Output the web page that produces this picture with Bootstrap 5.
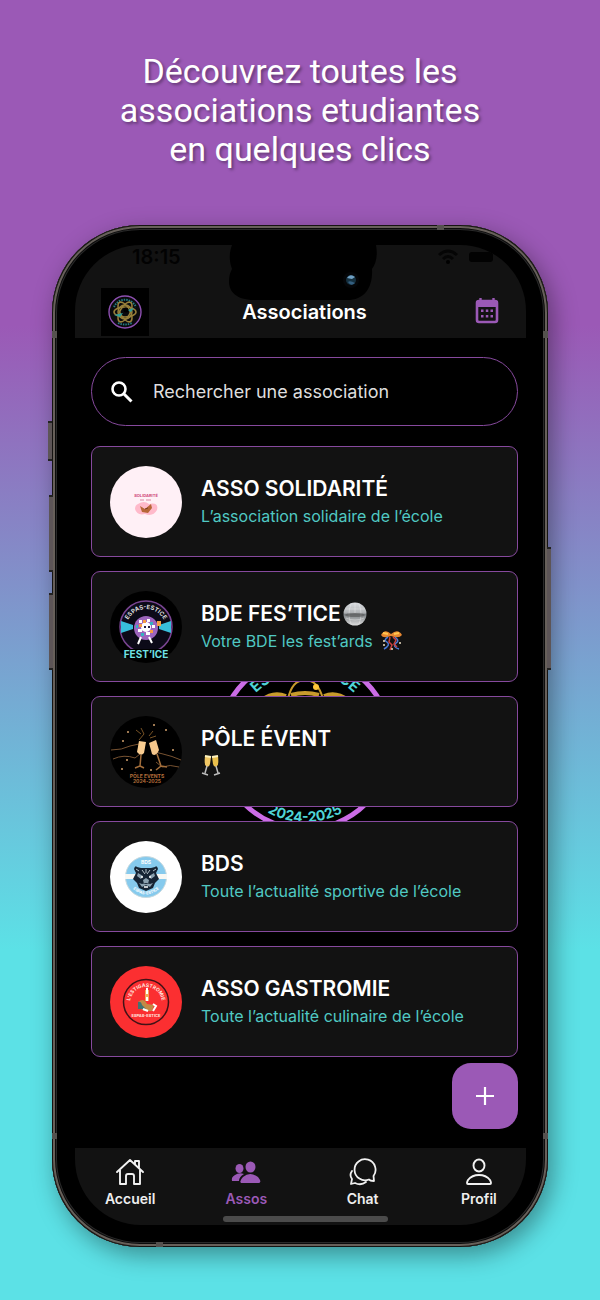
<!DOCTYPE html>
<html lang="fr">
<head>
<meta charset="utf-8">
<meta name="viewport" content="width=device-width, initial-scale=1">
<title>Associations</title>
<link href="https://cdn.jsdelivr.net/npm/bootstrap@5.3.0/dist/css/bootstrap.min.css" rel="stylesheet">
<style>
:root { --violet:#9b59b6; --surface:#121212; --teal:#50c9c3; }
body { font-family:Inter,"Liberation Sans",sans-serif; min-height:100vh; color:#fff;
  background:linear-gradient(180deg,#9b59b6 0,#9b59b6 25%,#5ce1e6 73%,#5ce1e6 100%); }
.promo { font-family:Roboto,"Liberation Sans",sans-serif; font-size:34px; line-height:39px; font-weight:400;
  padding:52px 16px 56px; margin:0; text-shadow:2px 2px 3px rgba(0,0,0,.35); }
.phone { margin:0 52px 54px; padding:20px 22px 22px 23px; background:#000; border-radius:88px;
  box-shadow:inset 0 0 0 1px #161412, inset 0 0 0 3px #67605a, inset 0 0 0 4px #0c0c0c, inset 0 0 0 5px #292929, 5px 8px 24px rgba(0,0,0,.38); }
.side-key { position:absolute; width:4px; background:#5d5557; border:solid #222; border-width:2px 0; }
.band { position:absolute; background:#55524f; }
.screen { border-radius:66px; background:#000; }
/* the app is a little wider than the visible glass */
.app-view { margin:0 -11px 0 -3px; }
.app-bar { height:93px; background:var(--surface); padding:0 38px 2px 29px; }
.app-bar h2 { font-size:20px; line-height:24px; font-weight:600; margin:0 0 12px; }
.bar-side { width:39px; margin-bottom:11px; }
.status { font-size:20px; line-height:24px; font-weight:600; color:#020202; }
.island { z-index:2; }
.content-area { padding:19px; }
.watermark { inset:0; }
.search-box { height:69px; border:1px solid #86499d; border-radius:35px; padding:0 20px 0 19px; gap:20px; background:#000; }
.search-box input { background:transparent; border:0; color:#fff; font-size:18px; line-height:24px; padding:0; min-width:0; outline:0; }
.search-box input::placeholder { color:#dedede; opacity:1; }
.asso-list { gap:14px; margin-top:20px; }
.asso { height:111px; border:1px solid #86499d; border-radius:9px; background:var(--surface); padding:0 18px; gap:19px; color:#fff; }
.asso h3 { font-size:21px; line-height:28px; font-weight:600; margin:0; }
.asso h3 svg { margin-left:2px; }
.asso p { font-size:16px; line-height:26px; min-height:26px; color:var(--teal); margin:0; }
.add-btn { width:66px; height:66px; border-radius:19px; background:var(--violet); border:0; margin-top:6px; }
.tab-bar { background:var(--surface); height:77px; padding-top:9px; }
.tab { color:#eee; font-size:14px; line-height:18px; font-weight:600; }
.tab svg { display:block; margin:0 auto 3px; }
.tab.active { color:var(--violet); }
.home-line { width:165px; height:6px; border-radius:3px; background:#4b4b4b; bottom:3px; left:50%; margin-left:-82px; }
svg text { font-family:Inter,"Liberation Sans",sans-serif; font-weight:700; }
</style>
</head>
<body>
<h1 class="promo text-center">Découvrez toutes les<br>associations etudiantes<br>en quelques clics</h1>

<main class="phone position-relative">
  <span class="side-key" style="left:-4px;top:196px;height:40px"></span>
  <span class="side-key" style="left:-3px;top:270px;height:77px"></span>
  <span class="side-key" style="left:-3px;top:368px;height:77px"></span>
  <span class="side-key" style="right:-3px;top:322px;height:123px"></span>
  <span class="band" style="left:0;top:106px;width:5px;height:7px"></span>
  <span class="band" style="right:0;top:106px;width:5px;height:7px"></span>
  <span class="band" style="left:0;bottom:108px;width:5px;height:6px"></span>
  <span class="band" style="right:0;bottom:108px;width:5px;height:6px"></span>
  <span class="band" style="right:104px;top:0;width:7px;height:5px"></span>
  <span class="band" style="left:104px;bottom:0;width:7px;height:5px"></span>

  <div class="screen overflow-hidden position-relative">
    <div class="app-view position-relative">
      <header class="app-bar d-flex align-items-end justify-content-between position-relative">
        <span class="status position-absolute" style="left:60px;top:0">18:15</span>
        <svg class="island position-absolute" style="left:157px;top:0" width="150" height="56" viewBox="0 0 150 56" aria-hidden="true">
          <path d="M3 0H147C149 10 147 19 143 24C144 42 136 55 118 55H25C7 55 0 46 0 37C0 31 1 28 3 24C0 16 0 8 3 0Z" fill="#000"/>
          <circle cx="122" cy="35" r="8" fill="#050608"/><circle cx="122" cy="35" r="5" fill="#15303f"/>
          <path d="M118 33Q121 28 126 32L123 34Z" fill="#6fa0c4"/><path d="M119 37Q121 35 126 38Q122 42 119 37Z" fill="#345f80"/>
        </svg>
        <svg class="position-absolute" style="right:19px;top:3px" width="80" height="18" viewBox="0 0 80 18" aria-hidden="true">
          <g fill="none" stroke="#050505" stroke-width="3"><path d="M1 7Q10-1 19 7M5 11Q10 6 15 11"/></g><circle cx="10" cy="14" r="2"/>
          <rect x="31" y="4" width="24" height="10" rx="3" fill="#020202"/>
        </svg>
        <svg class="flex-shrink-0" width="48" height="48" viewBox="0 0 48 48" role="img" aria-label="Logo">
          <rect width="48" height="48"/><circle cx="24" cy="24" r="16" fill="#0a0a0d" stroke="#8d4fb0" stroke-width="1.4"/>
          <path d="M13 19A12 12 0 0 1 35 19" fill="none" stroke="#247f83" stroke-width="2" stroke-dasharray="1.5 1"/>
          <path d="M17 35Q24 38 31 35" fill="none" stroke="#247f83" stroke-width="1.8" stroke-dasharray="1.5 1"/>
          <g fill="none" stroke="#98803a" stroke-width="1.5"><ellipse cx="24" cy="24" rx="11" ry="5"/><ellipse cx="24" cy="24" rx="11" ry="5" transform="rotate(60 24 24)"/><ellipse cx="24" cy="24" rx="11" ry="5" transform="rotate(120 24 24)"/><circle cx="24" cy="24" r="7"/></g>
          <path d="M13 27L22 25L19 29ZM26 22L33 20L30 24Z" fill="#2d9c98"/><circle cx="25" cy="22" r="2.5"/>
        </svg>
        <h2>Associations</h2>
        <button type="button" class="bar-side btn p-0 border-0 text-end" aria-label="Calendrier">
          <svg class="d-block ms-auto" width="24" height="28" viewBox="0 0 24 28"><path d="M5.500 1V5M18.500 1V5" stroke="#9b59b6" stroke-width="2.4"/><rect x="2" y="4" width="20" height="21" rx="2" fill="none" stroke="#9b59b6" stroke-width="2.6"/><path d="M1 4H23V10H1Z" fill="#9b59b6"/><path fill="#9b59b6" d="M6 12.500h2.500v2.500H6zM10.800 12.500h2.500v2.500h-2.500zM15.500 12.500h2.500v2.500h-2.500zM6 18h2.500v2.500H6zM10.800 18h2.500v2.500h-2.500zM15.500 18h2.500v2.500h-2.500z"/></svg>
        </button>
      </header>

      <section class="content-area position-relative d-flex flex-column">
        <div class="watermark position-absolute d-flex align-items-center justify-content-center">
          <svg width="180" height="180" viewBox="0 0 180 180" aria-hidden="true">
            <defs><path id="topArc" d="M20 90A70 70 0 0 1 160 90"/><path id="bottomArc" d="M11 90A79 79 0 0 0 169 90"/></defs>
            <circle cx="90" cy="90" r="86" fill="none" stroke="#cb6ce6" stroke-width="5"/>
            <g fill="#4fd3d6"><text font-size="15" text-anchor="middle"><textPath href="#topArc" startOffset="50%">ESPAS-ESTICE</textPath></text>
            <text font-size="14" text-anchor="middle"><textPath href="#bottomArc" startOffset="50%">2024-2025</textPath></text></g>
            <path d="M62 26H120V43H62Z" fill="#000"/>
            <g fill="none" stroke="#c89b2c" stroke-width="2"><path d="M73 46Q77 27 90 27Q103 27 108 46"/><path d="M47 47Q58 38 71 43M76 42Q90 38 104 42M109 43Q121 38 133 47" stroke-width="4"/></g>
            <circle cx="101" cy="34" r="3" fill="#ffc638"/>
          </svg>
        </div>

        <label class="search-box d-flex align-items-center position-relative" for="search">
          <svg class="flex-shrink-0" width="22" height="22" viewBox="0 0 22 22" aria-hidden="true"><circle cx="8" cy="8" r="6.500" fill="none" stroke="#fff" stroke-width="2.600"/><path d="M13 13L20.500 20.500" stroke="#fff" stroke-width="3"/></svg>
          <input class="flex-grow-1" id="search" type="text" placeholder="Rechercher une association">
        </label>

        <div class="asso-list d-flex flex-column position-relative">
          <article class="asso d-flex align-items-center">
            <svg class="flex-shrink-0" width="72" height="72" viewBox="0 0 72 72" aria-hidden="true"><circle cx="36" cy="36" r="36" fill="#fff0f6"/><text x="36" y="31" font-size="4" text-anchor="middle" fill="#cf477b">SOLIDARITÉ</text><path d="M30 34h4M36 34h5" stroke="#dc89a4"/><path d="M28 38Q34 34 39 38Q49 36 47 44Q43 51 35 48Q27 50 25 43Q25 39 28 38Z" fill="#ffb9ca"/><path d="M30 40L35 43L41 38L42 42L38 47L32 46Z" fill="#b76637"/><path d="M35 43l3-1" stroke="#7c3d24"/></svg>
            <div><h3>ASSO SOLIDARITÉ</h3><p>L’association solidaire de l’école</p></div>
          </article>

          <article class="asso d-flex align-items-center">
            <svg class="flex-shrink-0" width="72" height="72" viewBox="0 0 72 72" aria-hidden="true">
              <defs><path id="festArc" d="M16 38A20 20 0 0 1 56 38"/></defs>
              <circle cx="36" cy="36" r="36"/><circle cx="36" cy="36" r="26" fill="#0c0a18" stroke="#794491" stroke-width="1.500"/>
              <text font-size="6" fill="#ddd" text-anchor="middle"><textPath href="#festArc" startOffset="50%">ESPAS-ESTICE</textPath></text>
              <path d="M11 30L23 34V38L11 42ZM61 30L49 34V38L61 42Z" fill="#38bedb"/>
              <circle cx="36" cy="37" r="12" fill="#9c64bd"/>
              <g fill="#fff"><path d="M29 29h3v3h-3zM37 28h3v3h-3zM42 34h3v3h-3zM28 38h4v3h-4zM36 41h4v3h-4z"/><circle cx="36" cy="36" r="5"/></g><g fill="#f69d42"><path d="M33 29h3v3h-3zM29 33h3v3h-3zM40 39h3v3h-3zM47 30h4v5h-4z"/></g><g fill="#36b1c1"><path d="M40 31h3v3h-3zM31 42h3v3h-3zM26 34h2v3h-2z"/></g><path d="M34 36h2M38 36h2" stroke="#252040" stroke-width="2"/><path d="M31 46L28 53M39 46L42 52" stroke="#fff" stroke-width="2"/>
              <path d="M13 58H59L50 69H22Z" fill="#000"/><text x="36" y="67" font-size="10" text-anchor="middle" fill="#70e2e5">FEST’ICE</text>
            </svg>
            <div>
              <h3 class="d-flex align-items-center">BDE FES’TICE
                <svg width="24" height="24" viewBox="0 0 24 24" role="img" aria-label="Boule à facettes"><defs><linearGradient id="ball" x2="0" y2="1"><stop stop-color="#d9dce0"/><stop offset=".4" stop-color="#b5b8bb"/><stop offset=".5" stop-color="#777c80"/><stop offset="1" stop-color="#ddd"/></linearGradient></defs><circle cx="12" cy="12" r="11.500" fill="url(#ball)"/><path d="M2 7H22M1 11H23M3 16Q12 20 21 16M8 2Q4 12 8 22M16 2Q20 12 16 22M12 1V11" fill="none" stroke="#f7f7f7" opacity=".35"/><ellipse cx="12" cy="13" rx="10" ry="2" fill="#555" opacity=".6"/></svg>
              </h3>
              <p class="d-flex align-items-center">Votre BDE les fest’ards
                <svg class="ms-2" width="21" height="21" viewBox="0 0 21 21" role="img" aria-label="Confettis"><path d="M10 4Q4-2 0 5Q2 9 10 6Q18 9 21 5Q17-2 10 4Z" fill="#e78730"/><path d="M2 3L7 4M18 3L13 4" stroke="#ffc64f" stroke-width="2"/><path d="M7 7Q2 10 6 12Q10 15 3 19M14 7Q19 11 15 13Q11 17 18 19" fill="none" stroke="#4a79d8" stroke-width="1.500"/><path d="M9 7L8 12L11 15L9 20M12 7L15 10L13 14L16 17" fill="none" stroke="#ca4340" stroke-width="1.500"/><path d="M3 10v2M19 12v2M11 18v2M2 15h2" stroke="#eedfc5" stroke-width="1.500"/></svg>
              </p>
            </div>
          </article>

          <article class="asso d-flex align-items-center">
            <svg class="flex-shrink-0" width="72" height="72" viewBox="0 0 72 72" aria-hidden="true"><circle cx="36" cy="36" r="36"/><g fill="none" stroke="#775231"><path d="M1 34Q12 34 20 30L29 28M3 43Q14 38 25 42L30 38M71 44Q62 40 53 38L45 36M69 51Q60 48 52 51L46 46"/><path d="M31 39L30 50L25 52M30 50L34 52M47 38L51 50L46 54M51 50L57 51" stroke="#a36e3b" stroke-width="1.500"/><path d="M29 24L34 18L31 12M39 20L43 15M40 22L46 20M26 14L31 18" stroke="#785326"/></g><path d="M29 25L36 26L34 37Q31 41 27 36Z" fill="#f9cd91"/><path d="M39 27L46 24L49 34Q46 41 42 38Z" fill="#f5c78c"/><g fill="#d2a16c"><circle cx="18" cy="16" r="1"/><circle cx="13" cy="25" r="1"/><circle cx="44" cy="9" r="1"/><circle cx="56" cy="14" r="1"/><circle cx="63" cy="34" r="1"/><circle cx="12" cy="53" r="1"/><circle cx="17" cy="44" r="1"/><circle cx="41" cy="54" r="1"/></g><text x="37" y="62" font-size="5" text-anchor="middle" fill="#b66e3b">PÔLE EVENTS</text><text x="37" y="67" font-size="5" text-anchor="middle" fill="#b66e3b">2024-2025</text></svg>
            <div><h3>PÔLE ÉVENT</h3><p class="d-flex align-items-center"><svg width="20" height="21" viewBox="0 0 20 21" role="img" aria-label="Coupes de champagne"><path d="M4 1L10 2L9 9Q8 13 5 11Q3 10 4 1Z" fill="#f0c764"/><path d="M11 2L17 1Q18 10 16 11Q13 13 12 9Z" fill="#e9bf4c"/><path d="M4 1L10 2M11 2L17 1" stroke="#fff3bf" stroke-width="2"/><path d="M6 11L4 18M1 18L7 20M15 11L17 18M13 20L19 18" fill="none" stroke="#bdbdbd" stroke-width="1.500"/></svg></p></div>
          </article>

          <article class="asso d-flex align-items-center">
            <svg class="flex-shrink-0" width="72" height="72" viewBox="0 0 72 72" aria-hidden="true"><circle cx="36" cy="36" r="36" fill="#fff"/><circle cx="36" cy="36" r="20.500" fill="#86caed" stroke="#c6d9df"/><path d="M15 33H57V38H15Z" fill="#f7f8f4"/><text x="36" y="23" font-size="5" text-anchor="middle" fill="#fff">BDS</text><path id="bdsArc" d="M20 45Q36 62 52 45" fill="none"/><text font-size="4" fill="#fff" text-anchor="middle"><textPath href="#bdsArc" startOffset="50%">ESPAS-ESTICE</textPath></text><path d="M27 26Q25 24 24 28L26 32L23 38L27 42L29 47L36 50L43 47L45 42L49 38L46 32L48 28Q47 24 45 26L41 27H31Z" fill="#162434"/><path d="M28 32L33 35L31 38L27 35ZM44 32L39 35L41 38L45 35ZM33 39L36 37L39 39L38 43H34ZM29 42L32 46L36 44L40 46L43 42L40 43L36 42L32 43Z" fill="#8ba0ae"/><path d="M31 36h2M39 36h2M34 46h4" stroke="#fff" stroke-width="1.500"/><path d="M32 29L35 33M40 29L37 33M36 28V32M26 28L29 30M46 28L43 30" stroke="#b4c0c8"/></svg>
            <div><h3>BDS</h3><p>Toute l’actualité sportive de l’école</p></div>
          </article>

          <article class="asso d-flex align-items-center">
            <svg class="flex-shrink-0" width="72" height="72" viewBox="0 0 72 72" aria-hidden="true"><defs><path id="gastArc" d="M20 37A16 16 0 0 1 52 37"/></defs><circle cx="36" cy="36" r="36" fill="#fb2f31"/><circle cx="36" cy="36" r="22.500" fill="none" stroke="#421216" stroke-width="1.500"/><text font-size="5" fill="#ffe1db" text-anchor="middle"><textPath href="#gastArc" startOffset="50%">L’ESTIGASTROMIE</textPath></text><path d="M37 24V35" stroke="#f1a45a" stroke-width="4"/><path d="M37 22V28M37 31V35" stroke="#fff" stroke-width="2"/><path d="M28 36Q34 31 37 38L44 39L42 45H34L28 41Z" fill="#c38945"/><path d="M28 36Q31 35 32 39L36 43H28Z" fill="#427371"/><path d="M43 38L46 40L43 45M33 43L38 45" fill="none" stroke="#fff" stroke-width="2"/><text x="36" y="51" font-size="4" text-anchor="middle" fill="#ffe1db">ESPAS-ESTICE</text></svg>
            <div><h3>ASSO GASTROMIE</h3><p>Toute l’actualité culinaire de l’école</p></div>
          </article>
        </div>

        <button type="button" class="add-btn btn p-0 align-self-end position-relative" aria-label="Ajouter"><svg class="d-block mx-auto" width="18" height="18" viewBox="0 0 18 18"><path d="M9 0V18M0 9H18" stroke="#fff" stroke-width="2.200"/></svg></button>
      </section>

      <nav class="tab-bar d-flex align-items-start position-relative">
        <a href="#" class="tab flex-fill w-25 text-center text-decoration-none"><svg width="30" height="30" viewBox="0 0 30 30" fill="none" stroke="#f1f1f1" stroke-width="1.900" stroke-linejoin="round" stroke-linecap="round"><path d="M2 15L15 3L28 15M5 13V27H11V19Q11 17 13 17H17Q19 17 19 19V27H25V13M20 7V4H24V11"/></svg>Accueil</a>
        <a href="#" class="tab active flex-fill w-25 text-center text-decoration-none" aria-current="page"><svg width="30" height="30" viewBox="0 0 30 30" fill="#9b59b6"><ellipse cx="19.500" cy="10" rx="5" ry="5.500"/><path d="M10 26Q8 24 12 20Q19 14 27 20Q31 25 28 26Z"/><ellipse cx="8.500" cy="11.500" rx="4" ry="4.500"/><path d="M1 24Q0 20 4 18Q8 15 13 17Q8 20 8 24Z"/></svg>Assos</a>
        <a href="#" class="tab flex-fill w-25 text-center text-decoration-none"><svg width="30" height="30" viewBox="0 0 30 30" fill="none" stroke="#f1f1f1" stroke-width="1.800" stroke-linejoin="round" stroke-linecap="round"><path d="M26 24Q22 24 21 22.500A10.500 10.500 0 1 1 25.500 19ZM4 14Q1 18 4 22L3 27L7 26Q13 29 18 25"/></svg>Chat</a>
        <a href="#" class="tab flex-fill w-25 text-center text-decoration-none"><svg width="30" height="30" viewBox="0 0 30 30" fill="none" stroke="#f1f1f1" stroke-width="1.900"><ellipse cx="15" cy="8.500" rx="5.500" ry="6"/><path d="M4 27Q2 27 4 23Q8 18 15 18Q22 18 26 23Q28 27 26 27Z"/></svg>Profil</a>
        <span class="home-line position-absolute"></span>
      </nav>
    </div>
  </div>
</main>
<script src="https://cdn.jsdelivr.net/npm/bootstrap@5.3.0/dist/js/bootstrap.bundle.min.js"></script>
</body>
</html>
